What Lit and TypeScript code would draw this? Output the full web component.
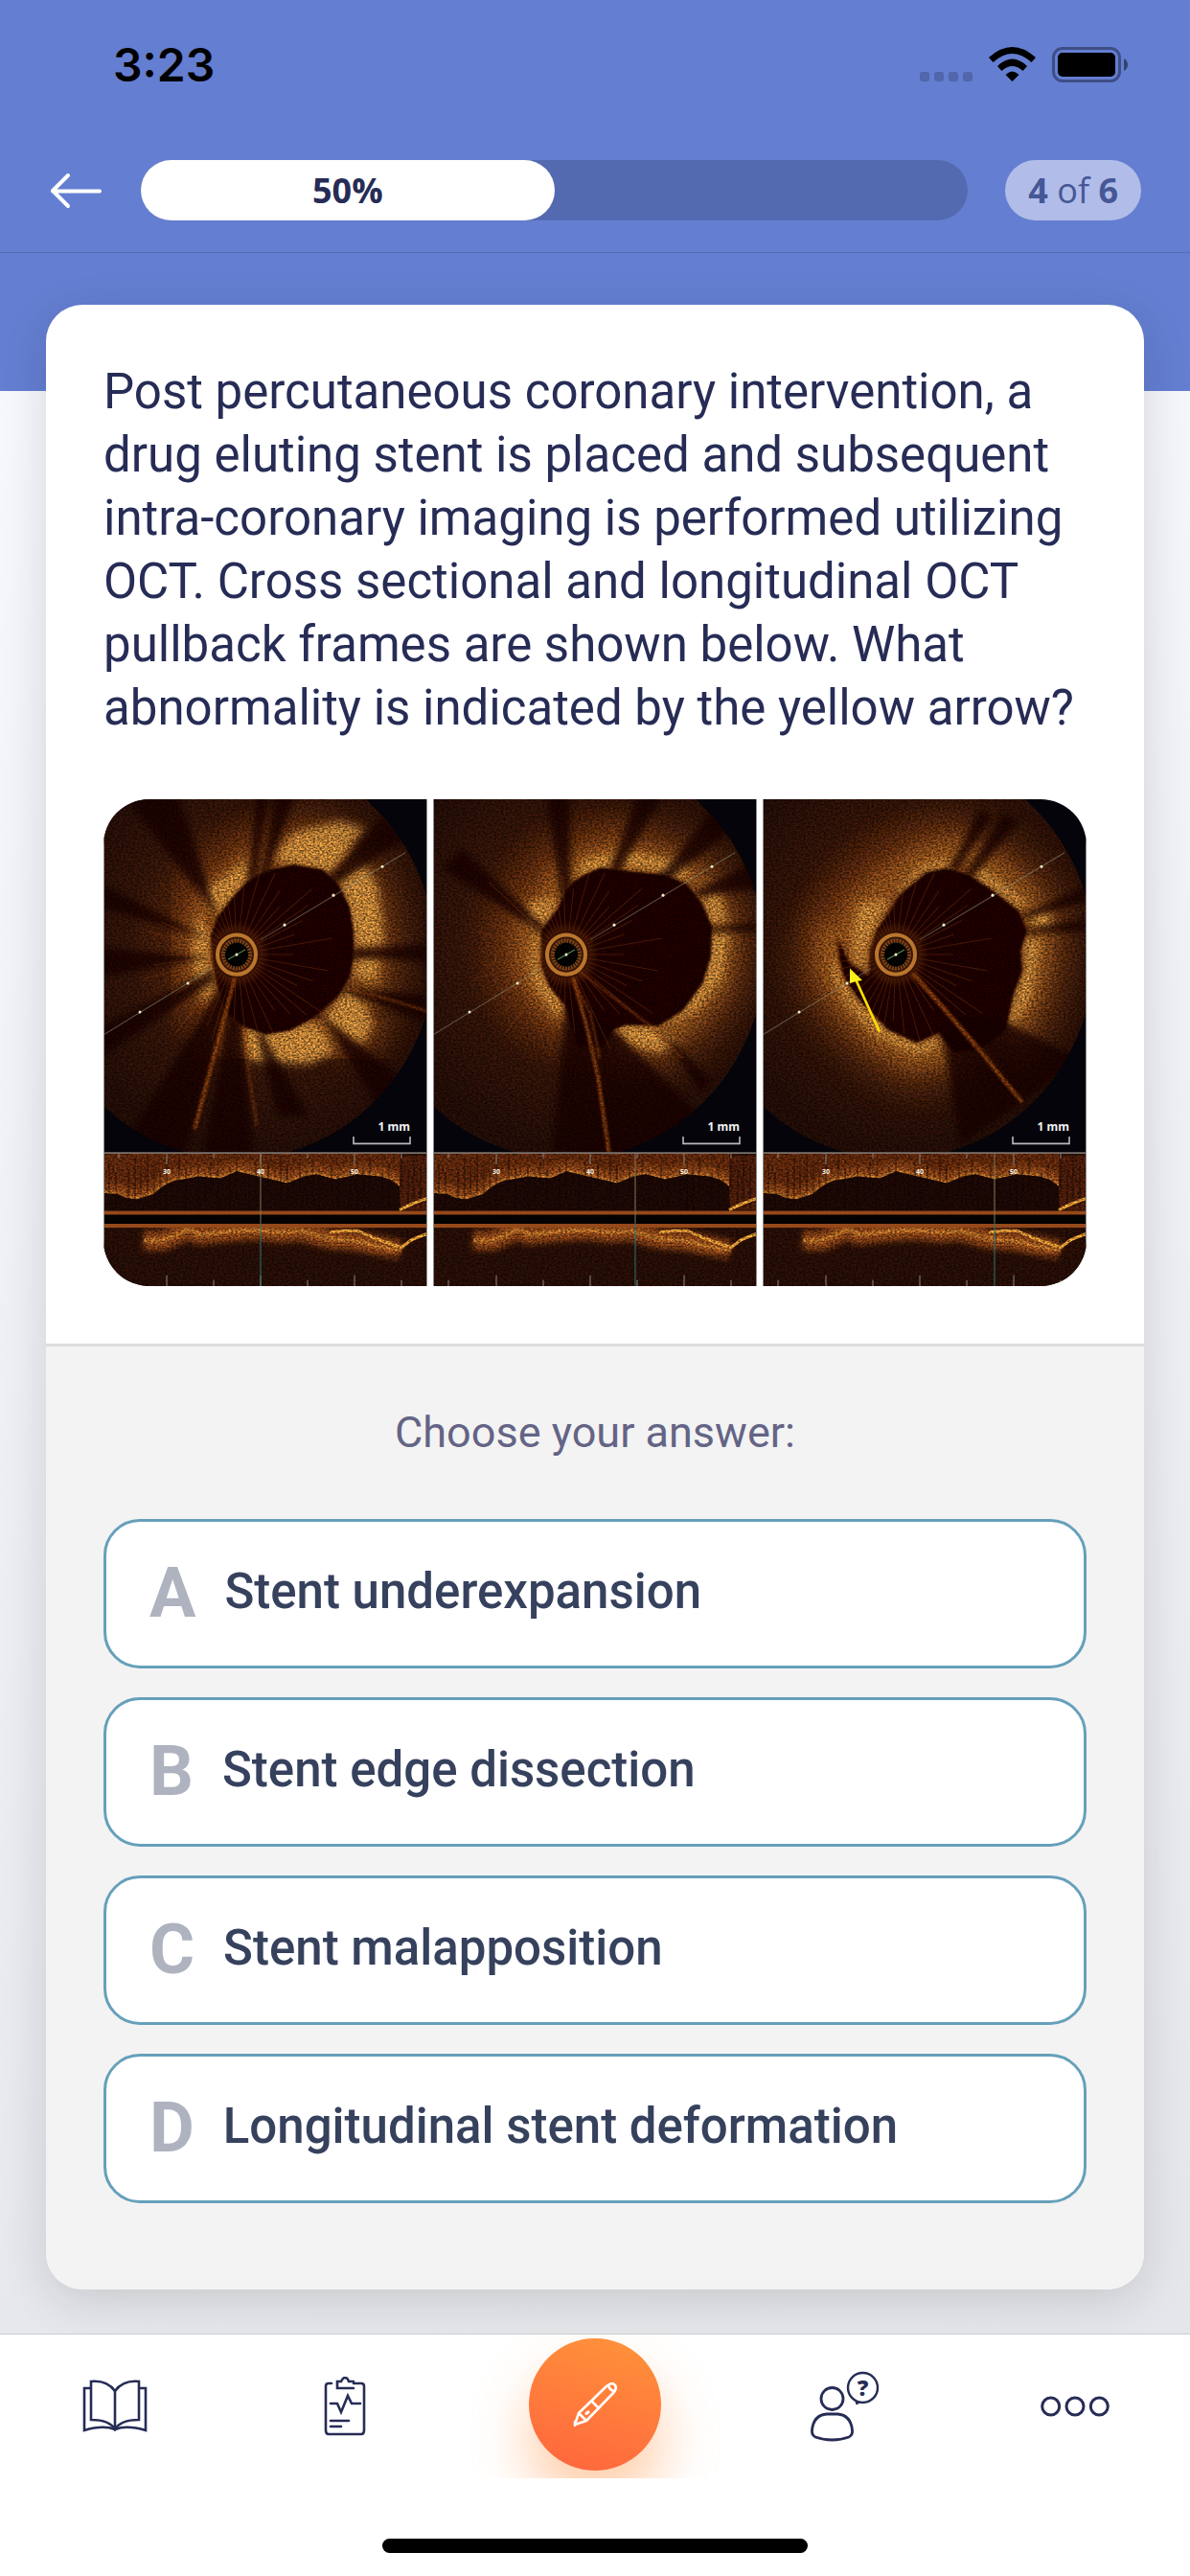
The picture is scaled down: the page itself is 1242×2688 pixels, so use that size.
import { LitElement, html, svg, css } from "lit";
import { customElement, property, state } from "lit/decorators.js";

interface Slice {
  lumen: string;
  halo: string[];
  patches: string[];
  shadows: string[];
  wires: string[];
  cursor: number;
}

const SLICES: Slice[] = [
  {
    lumen:
      "M119 119L134 100L149 84L160 77L175 71L199 66L229 71L245 86L257 109L261 133L261 159L257 179L245 199L222 219L195 234L169 238L145 229L128 215L119 189L114 166L112 139Z",
    halo: [
      "M100 190L97 150L103 115L122 92L150 66",
      "M180 58L215 45L245 58L268 85L280 120L282 160L276 195L255 222",
      "M148 245L190 252L225 238L262 232",
    ],
    patches: [
      "M105 93L149 63L149 83L119 119Z",
      "M178 60L198 35L245 22L272 29L235 76L199 66Z",
      "M247 80L272 66L286 90L292 146L262 150Z",
      "M262 162L286 158L286 182L260 180Z",
      "M99 115L112 139L116 190L106 208L92 160Z",
      "M146 233L222 226L240 256L214 268L184 266L152 264Z",
      "M245 202L258 188L282 226L270 248L228 222Z",
    ],
    shadows: [
      "M151 84L160 -5L172 -5L160 80Z",
      "M163 80L180 -5L200 -5L172 74Z",
      "M234 80L290 18L318 38L246 84Z",
      "M119 119L20 -5L78 -5Z",
      "M110 142L-5 84L-5 108Z",
      "M112 160L-5 150L-5 180Z",
      "M114 172L-5 232L-5 262L116 184Z",
      "M260 152L338 146L338 164L260 160Z",
      "M250 190L338 198L338 226L248 194Z",
      "M226 217L322 290L290 316Z",
      "M120 194L20 350L84 360L134 196Z",
      "M134 196L104 360L156 360L142 200Z",
      "M160 236L182 320L214 320L166 236Z",
    ],
    wires: ["M137 180L118 250L95 333", "M146 230L152 280L160 330", "M252 191L290 200L338 214"],
    cursor: 164,
  },
  {
    lumen:
      "M113 133L131 109L138 93L147 83L158 76L175 69L205 73L241 76L265 86L281 106L291 129L290 159L281 186L261 213L235 229L201 228L188 233L178 250L150 250L138 209L121 189L113 169Z",
    halo: [
      "M132 214L112 195L98 170L96 140L112 108L132 80L165 60L192 58",
      "M198 60L240 62L272 78L296 110L305 145L298 185L272 218L240 240L205 244",
    ],
    patches: [
      "M100 104L130 98L126 118L110 132L98 126Z",
      "M105 134L113 136L113 172L136 208L130 222L106 190L100 160Z",
      "M142 84L160 60L190 54L182 70L158 76Z",
      "M196 66L205 54L262 64L268 84L240 74Z",
      "M281 100L298 94L306 124L292 126Z",
      "M291 135L308 135L302 180L276 212L234 236L260 212L282 184Z",
      "M188 232L202 226L232 230L254 246L236 256L208 248Z",
    ],
    shadows: [
      "M134 102L118 -5L142 -5L144 90Z",
      "M184 72L214 -5L240 -5L194 74Z",
      "M236 78L296 6L318 26L246 82Z",
      "M272 94L338 62L338 90L278 98Z",
      "M290 130L338 124L338 134L290 134Z",
      "M114 136L10 70L30 50L116 128Z",
      "M139 206L124 360L196 360L160 216Z",
      "M160 210L190 360L290 330L196 240Z",
      "M232 228L290 284L280 296Z",
    ],
    wires: ["M146 180L160 228L172 280L184 360", "M150 172L228 230L260 262", "M146 182L164 216L174 262"],
    cursor: 211,
  },
  {
    lumen:
      "M131 116L144 96L171 74L191 70L214 76L241 93L267 113L276 133L269 153L271 173L261 199L254 233L228 252L200 256L184 236L161 246L131 233L101 203L84 179L79 159L77 139L84 152L91 166L111 179L112 153L119 132Z",
    halo: [
      "M70 140L68 175L85 205L118 240L155 262L188 256",
      "M88 140L100 108L135 80L170 58L200 50L235 66L270 92L292 125L290 165L280 200L264 232",
    ],
    patches: [
      "M101 106L135 98L121 128L112 150L111 176L92 164L94 132Z",
      "M135 96L165 66L196 58L192 69L170 73L144 94Z",
      "M216 74L228 68L276 104L270 112L240 92Z",
      "M279 118L300 112L300 128L282 130Z",
      "M272 140L290 142L280 200L262 228L256 226L264 196L273 172Z",
      "M76 150L84 180L100 204L132 234L162 248L184 238L184 252L160 258L120 240L88 208L72 176Z",
    ],
    shadows: [
      "M196 70L226 10L240 18L203 72Z",
      "M211 77L250 14L268 22L219 80Z",
      "M272 116L338 88L338 103L276 120Z",
      "M277 131L338 121L338 134L278 135Z",
      "M188 236L206 350L270 306L200 220Z",
      "M200 218L272 306L330 262L256 226Z",
    ],
    wires: ["M156 176L184 206L222 248L250 282L271 306", "M158 176L190 212L222 250", "M78 140L79 165L86 184"],
    cursor: 242,
  },
];

const TICKS = [16, 66, 115, 164, 213, 262, 311];
const MARKERS: [number, number][] = [[38, 215], [88, 186], [139, 157], [189, 127], [240, 97], [291, 68]];
const WALL =
  "M0 398L15 399L24 403L35 404L52 399L62 391L72 386L99 381L122 383L139 376L162 381L192 388L209 381L222 379L242 384L265 379L289 381L301 385L309 391";
const FLOOR =
  "M42 446L62 446L76 440L89 434L100 440L129 437L160 435L185 438L205 436L220 440L235 444L262 446L280 450L310 456";

const rays = Array.from({ length: 44 }, (_, i) => {
  const a = (i / 44) * Math.PI * 2 + Math.sin(i * 7) * 0.04;
  const r = 60 + ((i * 37) % 50);
  return `M${(139 + Math.cos(a) * 24).toFixed(1)} ${(157 + Math.sin(a) * 24).toFixed(1)}L${(139 + Math.cos(a) * r).toFixed(1)} ${(157 + Math.sin(a) * r).toFixed(1)}`;
}).join("");

const streaks = Array.from({ length: 40 }, (_, i) => {
  const x = (i * 53) % 338;
  const top = 360 + ((i * 29) % 20);
  return `M${x} ${top}V${top + 26 + ((i * 17) % 30)}`;
}).join("");

const slice = (s: Slice, x: number, arrow: boolean) => svg`
  <svg x=${x} y="0" width="338" height="508" viewBox="0 0 338 492" preserveAspectRatio="none">
    <rect width="338" height="492" fill="#04040a" />
    <g clip-path="url(#field)">
      <g filter="url(#grain)">
        <circle cx="139" cy="157" r="207" fill="url(#tissue)" />
        ${s.halo.map((d) => svg`<path d=${d} class="halo wide" />`)}
        ${s.halo.map((d) => svg`<path d=${d} class="halo" />`)}
        ${s.patches.map((d) => svg`<path d=${d} class="patch" />`)}
        <path d=${s.lumen} class="lumen" />
        ${s.shadows.map((d) => svg`<path d=${d} class="shadow" />`)}
        ${s.wires.map((d, i) => svg`<path d=${d} class=${i === 0 ? "wire main" : "wire"} />`)}
      </g>
      <path d=${rays} stroke="#8a3e12" stroke-width="1" opacity=".38" />
      <circle cx="139" cy="157" r="30" fill="#7a3a0c" opacity=".3" filter="url(#soft)" />
      <circle cx="139" cy="157" r="20" fill="#3a1708" stroke="#b9762c" stroke-width="4" />
      <circle cx="139" cy="157" r="14" fill="#020202" stroke="#7c4418" stroke-width="4" stroke-dasharray="2 1" />
      <path d="M0 238L113 171M164 142L315 54" stroke="#8d8a70" stroke-width="1" opacity=".6" />
      <path d="M130 162L148 152" stroke="#5f8a50" stroke-width="1" />
      ${MARKERS.map(([cx, cy]) => svg`<circle cx=${cx} cy=${cy} r="1.5" fill="#f3eec8" />`)}
    </g>
    <path d="M261 341V348H320V341" fill="none" stroke="#b9b9bd" stroke-width="1.6" />

    <g filter="url(#grain)">
      <rect y="357" width="338" height="135" fill="#260d06" />
      <path d="${WALL}L309 357H0Z" fill="#5c260b" />
      <path d=${WALL} class="wall wide" />
      <path d=${WALL} class="wall" />
      <rect x="309" y="360" width="29" height="55" fill="#4a1c0a" />
      <path d="${WALL}L310 418H0Z" fill="#1b0805" />
      <path d=${streaks} stroke="#120403" stroke-width="1.5" opacity=".45" />
      <path d=${FLOOR} class="wall wide" />
      <path d=${FLOOR} class="wall" />
      <path d="M309 415L322 409L338 403" class="edge" />
      <path d="M236 438L250 436L265 436L284 444L311 453L322 445L338 439" class="edge" />
      <path d="M0 460H338V492H0Z" fill="#260c05" opacity=".3" />
    </g>
    <rect y="416" width="338" height="4" fill="#95491a" />
    <rect y="429" width="338" height="4" fill="#95491a" />
    <rect y="420" width="338" height="9" fill="#050202" />
    <path d="M0 357.500H338" stroke="#77706c" stroke-width="1.5" />
    ${TICKS.map(
      (t, i) => svg`<path d="M${t} 358V${i % 2 ? 369 : 363}M${t} 492V${i % 2 ? 481 : 486}" stroke="#8d8680" stroke-width="1" />`,
    )}
    <path d="M${s.cursor} 358V428" stroke="#83795a" stroke-width="1" />
    <path d="M${s.cursor} 428V492" stroke="#2f7470" stroke-width="1" />
    ${arrow
      ? svg`<path d="M122 235L97 182" stroke="#ffdf00" stroke-width="2.6" /><path d="M91 171L104 183L97.500 184L91 186Z" fill="#fff21a" />`
      : null}
    <path d="M.5 0V492M337.500 0V492" stroke="#8d8d8d" stroke-width="1" />
  </svg>
  <text x=${x + 320} y="346" text-anchor="end" class="scale">1 mm</text>
  ${["30", "40", "50"].map((n, i) => svg`<text x=${x + 66 + i * 98} y="391" text-anchor="middle" class="depth">${n}</text>`)}`;

@customElement("oct-frames")
export class OctFrames extends LitElement {
  static styles = css`
    :host {
      display: block;
      border-radius: 48px;
      overflow: hidden;
      background: #fff;
    }
    .frames {
      display: block;
      width: 100%;
      height: auto;
    }
    .halo {
      fill: none;
      stroke: #a86620;
      stroke-width: 24;
      opacity: 0.55;
      stroke-linecap: round;
      filter: url(#blur);
    }
    .halo.wide {
      stroke: #7c3f12;
      stroke-width: 64;
      opacity: 0.6;
      filter: url(#haze);
    }
    .patch {
      fill: #d39440;
      opacity: 0.75;
      filter: url(#smear);
    }
    .lumen {
      fill: #1b0604;
      filter: url(#crisp);
    }
    .shadow {
      fill: #150604;
      opacity: 0.78;
      filter: url(#soft);
    }
    .wire {
      fill: none;
      stroke: #8a3f10;
      stroke-width: 3;
      opacity: 0.5;
      filter: url(#crisp);
    }
    .wire.main {
      stroke: #93450f;
      stroke-width: 4;
      opacity: 0.75;
    }
    .scale {
      font: 700 12px "Noto Sans", sans-serif;
      fill: #f2f2f2;
    }
    .depth {
      font: 700 7px "Noto Sans", sans-serif;
      fill: #f6f0e6;
    }
    .wall {
      fill: none;
      stroke: #b87028;
      stroke-width: 4;
      filter: url(#crisp);
    }
    .wall.wide {
      stroke: #874212;
      stroke-width: 20;
      filter: url(#soft);
    }
    .edge {
      fill: none;
      stroke: #dc9434;
      stroke-width: 3;
    }
  `;

  render() {
    return html`
      <svg class="frames" viewBox="0 0 1026 508" role="img" aria-label="Three OCT frames">
        <defs>
          <radialGradient id="tissue" gradientUnits="userSpaceOnUse" cx="165" cy="145" r="215">
            <stop offset=".4" stop-color="#4e210a" />
            <stop offset=".65" stop-color="#301308" />
            <stop offset="1" stop-color="#220c06" />
          </radialGradient>
          <clipPath id="field"><path d="M-68 157A207 207 0 0 1 346 157A207 207 0 0 1 199 355L196 357H84L79 355A207 207 0 0 1 -68 157Z" /></clipPath>
          <filter id="haze" x="-50%" y="-50%" width="200%" height="200%"><feGaussianBlur stdDeviation="16" /></filter>
          <filter id="blur" x="-50%" y="-50%" width="200%" height="200%"><feGaussianBlur stdDeviation="8" /></filter>
          <filter id="smear" x="-50%" y="-50%" width="200%" height="200%"><feGaussianBlur stdDeviation="4" /></filter>
          <filter id="soft" x="-50%" y="-50%" width="200%" height="200%"><feGaussianBlur stdDeviation="3" /></filter>
          <filter id="crisp" x="-20%" y="-20%" width="140%" height="140%"><feGaussianBlur stdDeviation="1" /></filter>
          <filter id="grain" filterUnits="userSpaceOnUse" x="0" y="0" width="338" height="492" color-interpolation-filters="sRGB">
            <feTurbulence type="fractalNoise" baseFrequency=".42 .58" numOctaves="2" seed="8" result="n" />
            <feColorMatrix in="n" type="matrix" values="1.900 0 0 0 -.45  1.900 0 0 0 -.45  1.900 0 0 0 -.45  0 0 0 0 1" result="g" />
            <feComposite in="SourceGraphic" in2="g" operator="arithmetic" k1=".95" k2=".48" />
          </filter>
        </defs>
        ${SLICES.map((s, i) => slice(s, i * 344, i === 2))}
      </svg>
    `;
  }
}

@customElement("answer-option")
export class AnswerOption extends LitElement {
  @property() letter = "";
  @property() label = "";

  static styles = css`
    :host {
      display: block;
    }
    .option {
      display: flex;
      align-items: center;
      gap: 30px;
      width: 100%;
      min-height: 156px;
      box-sizing: border-box;
      padding: 0 45px;
      border: 3px solid #66a0ba;
      border-radius: 38px;
      background: #fff;
      color: #36415d;
      font: 500 51px/60px Roboto, sans-serif;
      text-align: left;
      cursor: pointer;
    }
    .letter {
      color: #aeb3bf;
      font-weight: 700;
      font-size: 72px;
    }
    .label {
      padding-bottom: 4px;
    }
  `;

  render() {
    return html`<button class="option" type="button">
      <span class="letter">${this.letter}</span><span class="label">${this.label}</span>
    </button>`;
  }
}

const ICONS = {
  book: svg`<svg width="68" height="56" viewBox="0 0 68 56" fill="none" stroke="currentColor" stroke-width="2.6">
      <path d="M34 12C29 5 20 1 9 2V42C20 42 30 45 34 52C38 45 48 42 59 42V2C48 1 39 5 34 12Z" />
      <path d="M34 12V52M9 9H2V53C12 50 24 48 34 52C44 48 56 50 66 53V9H59" />
    </svg>`,
  clipboard: svg`<svg width="44" height="62" viewBox="0 0 44 62" fill="none" stroke="currentColor" stroke-width="2.600" stroke-linecap="round">
      <path d="M8 7H5Q2 7 2 10V56Q2 60 5 60H39Q42 60 42 56V10Q42 7 39 7H31" />
      <path d="M31 12H14V5H18Q20 1 22 1Q25 1 26 5H31" />
      <path d="M7 28H14L18 37L25 20L29 28H38M7 46H26M7 52H18" />
    </svg>`,
  person: svg`<svg width="72" height="74" viewBox="0 0 72 74" fill="none" stroke="currentColor" stroke-width="2.800">
      <circle cx="22.500" cy="29" r="11.500" />
      <path d="M17 45H28Q42 46 43.500 62Q44 67 40 69Q32 72 22.500 72Q13 72 5 69Q1 67 1.500 62Q3 46 17 45Z" />
      <circle cx="54.500" cy="17.500" r="15.500" stroke-width="2.400" />
      <path d="M47 32L48 35L52 32.500Z" fill="currentColor" stroke-width="1" />
      <text x="54.500" y="26" text-anchor="middle" font-family="Open Sans, sans-serif" font-size="23" font-weight="800" fill="currentColor" stroke="none">?</text>
    </svg>`,
  more: svg`<svg width="72" height="22" viewBox="0 0 72 22" fill="none" stroke="currentColor" stroke-width="3">
      <circle cx="10.700" cy="11" r="9" /><circle cx="36" cy="11" r="9" /><circle cx="61.300" cy="11" r="9" />
    </svg>`,
  pen: svg`<svg width="46" height="46" viewBox="0 0 46 46" fill="none" stroke="currentColor" stroke-width="2.600" stroke-linecap="round" stroke-linejoin="round">
      <path d="M2 44L6 32L35 4Q41 -1 44 3Q46 6 43 10L14 40L2 44ZM6 32L14 40M20 20L27 27M2 41V45M37 3Q38 8 43 9" />
      <path d="M14 32.500L16 31" stroke-width="3.200" />
    </svg>`,
};

@customElement("app-root")
export class AppRoot extends LitElement {
  @state() private progress = 50;

  static styles = css`
    :host {
      display: flex;
      flex-direction: column;
      min-height: 100vh;
      font-family: Roboto, sans-serif;
      color: #262c55;
    }
    .top {
      background: #647ed1;
      border-bottom: 1px solid #546bb5;
    }
    .status {
      display: flex;
      align-items: center;
      justify-content: space-between;
      height: 136px;
      padding: 0 64px 0 118px;
      color: #000;
      font: 600 48px/60px Inter, sans-serif;
    }
    .signals {
      display: flex;
      align-items: center;
    }
    .quiz {
      display: flex;
      align-items: center;
      padding: 31px 51px 33px;
    }
    .back {
      display: flex;
      padding: 0;
      border: 0;
      background: none;
      color: #fff;
      cursor: pointer;
    }
    .track {
      flex: 1;
      margin: 0 39px;
      border-radius: 32px;
      background: #546ab0;
    }
    .fill {
      border-radius: 32px;
      background: #fff;
      color: #262c55;
      text-align: center;
      font: 700 36px/63px "Open Sans", sans-serif;
    }
    .count {
      padding: 0 24px;
      border-radius: 32px;
      background: #b1bde8;
      color: #465796;
      font: 400 36px/63px "Open Sans", sans-serif;
    }
    .count b {
      font-weight: 700;
    }
    .main {
      flex: 1;
      padding: 54px 48px 46px;
      background:
        linear-gradient(#647ed1, #647ed1) 0 0 / 100% 144px no-repeat,
        linear-gradient(170deg, #f8f9fd, #e5e6ea);
    }
    .card {
      border-radius: 38px;
      overflow: hidden;
      background: #fff;
      box-shadow: 0 12px 48px rgba(20, 20, 30, 0.14);
    }
    .question {
      padding: 58px 60px 60px;
    }
    .prompt {
      margin: 0 0 62px;
      font-weight: 400;
      font-size: 51px;
      line-height: 66px;
    }
    .answers {
      display: flex;
      flex-direction: column;
      gap: 30px;
      padding: 60px 60px 90px;
      border-top: 3px solid #dcdcdc;
      background: #f3f3f3;
    }
    .hint {
      margin: 0 0 30px;
      color: #646485;
      text-align: center;
      font-weight: 400;
      font-size: 45px;
      line-height: 60px;
    }
    .tabs {
      display: grid;
      grid-template-columns: 240fr 240fr 282fr 240fr 240fr;
      height: 150px;
      border-top: 1px solid #c9cbd1;
      background: #fff;
      overflow: hidden;
    }
    .tab {
      display: flex;
      align-items: center;
      justify-content: center;
      color: #262c55;
    }
    .tab.current {
      align-items: flex-start;
      padding-top: 4px;
    }
    .round {
      display: flex;
      align-items: center;
      justify-content: center;
      width: 138px;
      height: 138px;
      border-radius: 50%;
      background: linear-gradient(195deg, #ff8f3a 10%, #ff693d 90%);
      box-shadow: 0 36px 60px rgba(255, 145, 60, 0.45);
      color: #fff;
    }
    .home {
      display: flex;
      justify-content: center;
      padding: 63px 0 24px;
      background: #fff;
    }
    .bar {
      width: 444px;
      height: 15px;
      border-radius: 8px;
      background: #000;
    }
  `;

  render() {
    const answers = ["Stent underexpansion", "Stent edge dissection", "Stent malapposition", "Longitudinal stent deformation"];
    return html`
      <header class="top">
        <div class="status">
          <span>3:23</span>
          <span class="signals">
            <svg width="218" height="40" viewBox="0 0 218 40" aria-hidden="true">
              <g fill="#5166ab">
                <rect x="0" y="27" width="10" height="10" rx="3" />
                <rect x="15" y="27" width="10" height="10" rx="3" />
                <rect x="30" y="27" width="10" height="10" rx="3" />
                <rect x="45" y="27" width="10" height="10" rx="3" />
              </g>
              <g>
                <path d="M72 12Q96.500 -10 121 12L116.500 17Q96.500 -1 76.500 17Z" />
                <path d="M81 21Q96.500 6 112 21L107.500 26Q96.500 16 85.500 26Z" />
                <path d="M89.500 30Q96.500 23 103.500 30L96.500 37Z" />
              </g>
              <rect x="139.500" y="2.500" width="69" height="34" rx="9.500" fill="none" stroke="#3e4e86" stroke-width="3" />
              <rect x="144" y="7" width="60" height="25" rx="5" />
              <path d="M213 13Q217 15.500 217 19.500Q217 23.500 213 26Z" fill="#34426f" />
            </svg>
          </span>
        </div>
        <div class="quiz">
          <button class="back" type="button" aria-label="Back">
            <svg width="57" height="38" viewBox="0 0 57 38" fill="none" stroke="currentColor" stroke-width="4" stroke-linecap="round" stroke-linejoin="round">
              <path d="M20 3L4 19L20 35M4 19.500H53" />
            </svg>
          </button>
          <div class="track" role="progressbar" aria-valuenow=${this.progress} aria-label="Quiz progress">
            <div class="fill" style="width:${this.progress}%">${this.progress}%</div>
          </div>
          <div class="count"><b>4</b> of <b>6</b></div>
        </div>
      </header>
      <main class="main">
        <article class="card">
          <section class="question">
            <h1 class="prompt">
              Post percutaneous coronary intervention, a drug eluting stent is placed and subsequent intra-coronary imaging
              is performed utilizing OCT. Cross sectional and longitudinal OCT pullback frames are shown below. What
              abnormality is indicated by the yellow arrow?
            </h1>
            <oct-frames></oct-frames>
          </section>
          <section class="answers">
            <h2 class="hint">Choose your answer:</h2>
            ${answers.map((a, i) => html`<answer-option letter=${"ABCD"[i]} label=${a}></answer-option>`)}
          </section>
        </article>
      </main>
      <nav class="tabs" aria-label="Sections">
        <a class="tab" href="#library" aria-label="Library">${ICONS.book}</a>
        <a class="tab" href="#cases" aria-label="Cases">${ICONS.clipboard}</a>
        <a class="tab current" href="#quiz" aria-label="Quiz"><span class="round">${ICONS.pen}</span></a>
        <a class="tab" href="#ask" aria-label="Ask">${ICONS.person}</a>
        <a class="tab" href="#more" aria-label="More">${ICONS.more}</a>
      </nav>
      <div class="home"><div class="bar"></div></div>
    `;
  }
}
